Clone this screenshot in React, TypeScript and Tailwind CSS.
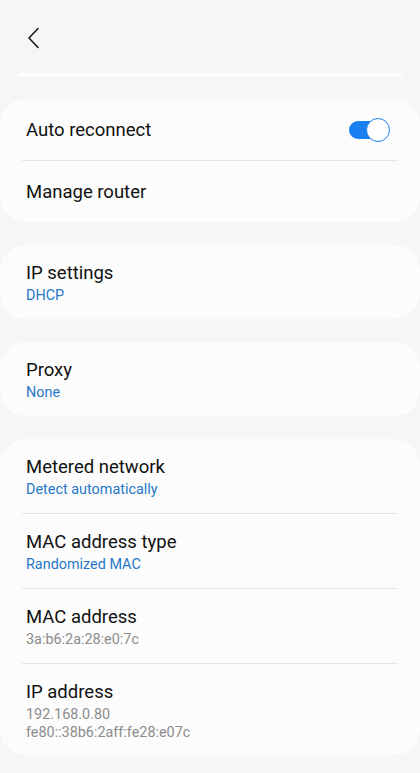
import React from 'react';

type Row = {
  title: string;
  sub?: string[];
  subTone?: 'blue' | 'gray';
  toggle?: boolean;
};

const font = { fontFamily: 'Roboto, "Noto Sans", sans-serif' };

const Toggle: React.FC = () => (
  <div className="relative mr-[4px] h-[24px] w-[41px]">
    <div className="absolute left-0 top-[3px] h-[18px] w-[38px] rounded-full bg-[#1a7ff0]" />
    <div className="absolute right-0 top-0 h-[24px] w-[24px] rounded-full border-[1.5px] border-[#1a7ff0] bg-white" />
  </div>
);

const SettingRow: React.FC<{ row: Row; last: boolean }> = ({ row, last }) => {
  const twoLine = row.sub && row.sub.length > 0;
  return (
    <div className="px-[22px]">
      <div
        className={
          'flex items-center justify-between px-[4px] ' +
          (twoLine ? 'pt-[16px] pb-[14px]' : 'h-[61px]')
        }
      >
        <div className="flex flex-col">
          <span className="text-[18.5px] leading-[24px] text-[#111]">{row.title}</span>
          {row.sub?.map((s, i) => (
            <span
              key={s}
              className={
                'text-[14.4px] ' +
                (i === 0 ? 'mt-[2px] leading-[18px] ' : 'leading-[17px] ') +
                (row.subTone === 'gray' ? 'text-[#8c8c8c]' : 'text-[#2778c8]')
              }
            >
              {s}
            </span>
          ))}
        </div>
        {row.toggle && <Toggle />}
      </div>
      {!last && <div className="h-px bg-[#e6e6e6]" />}
    </div>
  );
};

const Card: React.FC<{ rows: Row[] }> = ({ rows }) => (
  <div className="rounded-[26px] bg-[#fcfcfc]">
    {rows.map((r, i) => (
      <SettingRow key={r.title} row={r} last={i === rows.length - 1} />
    ))}
  </div>
);

export default function App() {
  return (
    <div className="min-h-[773px] w-[420px] bg-[#f6f6f6]" style={font}>
      <div className="flex h-[73px] items-start pl-[27px] pt-[27px]">
        <svg width="14" height="22" viewBox="0 0 14 22" fill="none">
          <path d="M11 1.5 L2 11 L11 20.5" stroke="#1a1a1a" strokeWidth="1.6" strokeLinecap="round" strokeLinejoin="round" />
        </svg>
      </div>
      <div className="mx-[18px] h-[3px] rounded-full bg-white" />
      <div className="flex flex-col gap-[23px] pt-[23px]">
        <Card rows={[{ title: 'Auto reconnect', toggle: true }, { title: 'Manage router' }]} />
        <Card rows={[{ title: 'IP settings', sub: ['DHCP'] }]} />
        <Card rows={[{ title: 'Proxy', sub: ['None'] }]} />
        <Card
          rows={[
            { title: 'Metered network', sub: ['Detect automatically'] },
            { title: 'MAC address type', sub: ['Randomized MAC'] },
            { title: 'MAC address', sub: ['3a:b6:2a:28:e0:7c'], subTone: 'gray' },
            { title: 'IP address', sub: ['192.168.0.80', 'fe80::38b6:2aff:fe28:e07c'], subTone: 'gray' },
          ]}
        />
      </div>
    </div>
  );
}
